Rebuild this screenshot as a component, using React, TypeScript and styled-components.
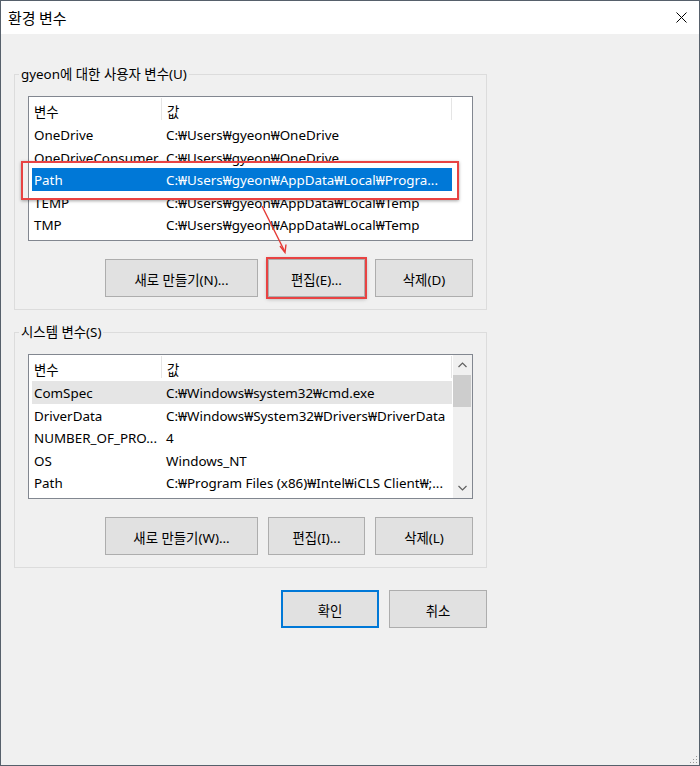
import React from "react";
import styled, { createGlobalStyle, css } from "styled-components";

const GlobalStyle = createGlobalStyle`
  html, body { margin: 0; padding: 0; background: #f0f0f0; }
  * { box-sizing: border-box; }
`;

const FONT = `"Noto Sans", "Noto Sans CJK KR", sans-serif`;

const Window = styled.div`
  position: relative;
  width: 700px;
  height: 766px;
  border: 1px solid #56606b;
  background: #f0f0f0;
  display: flex;
  flex-direction: column;
  font-family: ${FONT};
  font-size: 13.4px;
  color: #000;
`;

const TitleBar = styled.div`
  height: 33px;
  flex: none;
  background: #fff;
  display: flex;
  align-items: center;
  justify-content: space-between;
  padding: 0 12px 0 7px;
`;

const Title = styled.div`
  font-family: "Noto Sans CJK KR", sans-serif;
  font-size: 15px;
  line-height: 20px;
`;

const Body = styled.div`
  display: flex;
  flex-direction: column;
  width: 486px;
  padding: 32px 0 0 13px;
`;

const Group = styled.fieldset<{ $gap?: number }>`
  margin: ${(p) => p.$gap ?? 0}px 0 0 0;
  padding: 0 12px 12px 13px;
  border: 1px solid #dcdcdc;
  min-width: 0;
`;

const Legend = styled.legend`
  font-size: 13.4px;
  line-height: 16px;
  padding: 0 2px;
  margin-left: -9px;
`;

const ListView = styled.div`
  margin-top: 14px;
  width: 445px;
  height: 145px;
  border: 1px solid #828790;
  background: #fff;
  display: flex;
`;

const ListMain = styled.div`
  flex: 1;
  display: flex;
  flex-direction: column;
`;

const HeaderRow = styled.div`
  height: 26px;
  display: flex;
  flex: none;
`;

const HeaderCell = styled.div<{ $w: number }>`
  width: ${(p) => p.$w}px;
  padding-left: 5px;
  padding-top: 3px;
  display: flex;
  align-items: center;
  border-right: 1px solid #e5e5e5;
  margin: 1px 0 3px;
  white-space: nowrap;
`;

const Rows = styled.div`
  padding-left: 3px;
  display: flex;
  flex-direction: column;
`;

const Row = styled.div<{ $state?: "selected" | "soft"; $marked?: boolean }>`
  width: 420px;
  height: 22.5px;
  display: flex;
  align-items: center;
  padding-top: 2px;
  white-space: nowrap;
  ${(p) =>
    p.$state === "selected" &&
    css`
      background: #0078d7;
      color: #fff;
    `}
  ${(p) =>
    p.$state === "soft" &&
    css`
      background: #e5e5e5;
    `}
  ${(p) =>
    p.$marked &&
    css`
      position: relative;
      z-index: 1;
      &::after {
        content: "";
        position: absolute;
        left: -11px;
        right: -7px;
        top: -7px;
        bottom: -9px;
        border: 2px solid #e84343;
        box-shadow: 0 1px 3px rgba(0, 0, 0, 0.35);
        pointer-events: none;
      }
    `}
`;

const Cell = styled.div<{ $w: number }>`
  width: ${(p) => p.$w}px;
  padding-left: 2px;
  overflow: hidden;
  flex: none;
`;

const Scrollbar = styled.div`
  width: 19px;
  flex: none;
  background: #f0f0f0;
  display: flex;
  flex-direction: column;
`;

const ScrollArrow = styled.div`
  height: 20px;
  display: flex;
  align-items: center;
  justify-content: center;
`;

const Thumb = styled.div`
  height: 32px;
  margin: 0 1px 0 0;
  background: #cdcdcd;
`;

const Track = styled.div`
  flex: 1;
`;

const ButtonRow = styled.div<{ $top: number; $w?: number }>`
  display: flex;
  justify-content: flex-end;
  gap: 10px;
  margin-top: ${(p) => p.$top}px;
  width: ${(p) => (p.$w ? `${p.$w}px` : "auto")};
`;

const Button = styled.button<{ $w: number; $primary?: boolean; $marked?: boolean }>`
  width: ${(p) => p.$w}px;
  height: 38px;
  padding: 1px 0 0;
  background: #e1e1e1;
  border: 1px solid #adadad;
  font-family: ${FONT};
  font-size: 13.4px;
  color: #000;
  ${(p) =>
    p.$primary &&
    css`
      border: 2px solid #0078d7;
    `}
  ${(p) =>
    p.$marked &&
    css`
      outline: 2px solid #e84343;
      outline-offset: 0px;
      box-shadow: 0 1px 4px 1px rgba(0, 0, 0, 0.3);
    `}
`;

const Annotation = styled.svg`
  position: absolute;
  left: 254px;
  top: 198px;
  pointer-events: none;
`;

const Grip = styled.svg`
  position: absolute;
  right: 1px;
  bottom: 1px;
`;

const COL1 = 132;
const COL2 = 288;

type R = { name: string; value: string; state?: "selected" | "soft"; marked?: boolean };

const userVars: R[] = [
  { name: "OneDrive", value: "C:₩Users₩gyeon₩OneDrive" },
  { name: "OneDriveConsumer", value: "C:₩Users₩gyeon₩OneDrive" },
  { name: "Path", value: "C:₩Users₩gyeon₩AppData₩Local₩Progra...", state: "selected", marked: true },
  { name: "TEMP", value: "C:₩Users₩gyeon₩AppData₩Local₩Temp" },
  { name: "TMP", value: "C:₩Users₩gyeon₩AppData₩Local₩Temp" },
];

const sysVars: R[] = [
  { name: "ComSpec", value: "C:₩Windows₩system32₩cmd.exe", state: "soft" },
  { name: "DriverData", value: "C:₩Windows₩System32₩Drivers₩DriverData" },
  { name: "NUMBER_OF_PRO...", value: "4" },
  { name: "OS", value: "Windows_NT" },
  { name: "Path", value: "C:₩Program Files (x86)₩Intel₩iCLS Client₩;..." },
];

const Chevron = ({ up }: { up?: boolean }) => (
  <svg width="9" height="6" viewBox="0 0 9 6">
    <path
      d={up ? "M0.5 5 L4.5 1 L8.5 5" : "M0.5 1 L4.5 5 L8.5 1"}
      fill="none"
      stroke="#606060"
      strokeWidth="1.2"
    />
  </svg>
);

const List = ({ rows, scroll }: { rows: R[]; scroll?: boolean }) => (
  <ListView>
    <ListMain>
      <HeaderRow>
        <HeaderCell $w={133}>변수</HeaderCell>
        <HeaderCell $w={290}>값</HeaderCell>
      </HeaderRow>
      <Rows>
        {rows.map((r) => (
          <Row key={r.name} $state={r.state} $marked={r.marked}>
            <Cell $w={COL1}>{r.name}</Cell>
            <Cell $w={COL2}>{r.value}</Cell>
          </Row>
        ))}
      </Rows>
    </ListMain>
    {scroll && (
      <Scrollbar>
        <ScrollArrow>
          <Chevron up />
        </ScrollArrow>
        <Thumb />
        <Track />
        <ScrollArrow>
          <Chevron />
        </ScrollArrow>
      </Scrollbar>
    )}
  </ListView>
);

export default function App() {
  return (
    <>
      <GlobalStyle />
      <Window>
        <TitleBar>
          <Title>환경 변수</Title>
          <svg width="11" height="11" viewBox="0 0 11 11">
            <path d="M0.5 0.5 L10.5 10.5 M10.5 0.5 L0.5 10.5" stroke="#000" strokeWidth="1" />
          </svg>
        </TitleBar>
        <Body>
          <Group>
            <Legend>gyeon에 대한 사용자 변수(U)</Legend>
            <List rows={userVars} />
            <ButtonRow $top={18} $w={445}>
              <Button $w={153}>새로 만들기(N)...</Button>
              <Button $w={97} $marked>
                편집(E)...
              </Button>
              <Button $w={98}>삭제(D)</Button>
            </ButtonRow>
          </Group>
          <Group $gap={14}>
            <Legend>시스템 변수(S)</Legend>
            <List rows={sysVars} scroll />
            <ButtonRow $top={18} $w={445}>
              <Button $w={153}>새로 만들기(W)...</Button>
              <Button $w={97}>편집(I)...</Button>
              <Button $w={98}>삭제(L)</Button>
            </ButtonRow>
          </Group>
          <ButtonRow $top={22}>
            <Button $w={98} $primary>
              확인
            </Button>
            <Button $w={98}>취소</Button>
          </ButtonRow>
        </Body>
        <Annotation width="40" height="60" viewBox="0 0 40 60">
          <path d="M7 7 L29.5 52" stroke="#e53935" strokeWidth="1.4" fill="none" />
          <path d="M25 47 L30 53.5 L31 45.5" stroke="#e53935" strokeWidth="1.4" fill="none" />
        </Annotation>
        <Grip width="8" height="8" viewBox="0 0 8 8">
          <rect x="6" y="0" width="1" height="1" fill="#999" />
          <rect x="3" y="3" width="1" height="1" fill="#999" />
          <rect x="6" y="3" width="1" height="1" fill="#999" />
          <rect x="0" y="6" width="1" height="1" fill="#999" />
          <rect x="3" y="6" width="1" height="1" fill="#999" />
          <rect x="6" y="6" width="1" height="1" fill="#999" />
        </Grip>
      </Window>
    </>
  );
}
